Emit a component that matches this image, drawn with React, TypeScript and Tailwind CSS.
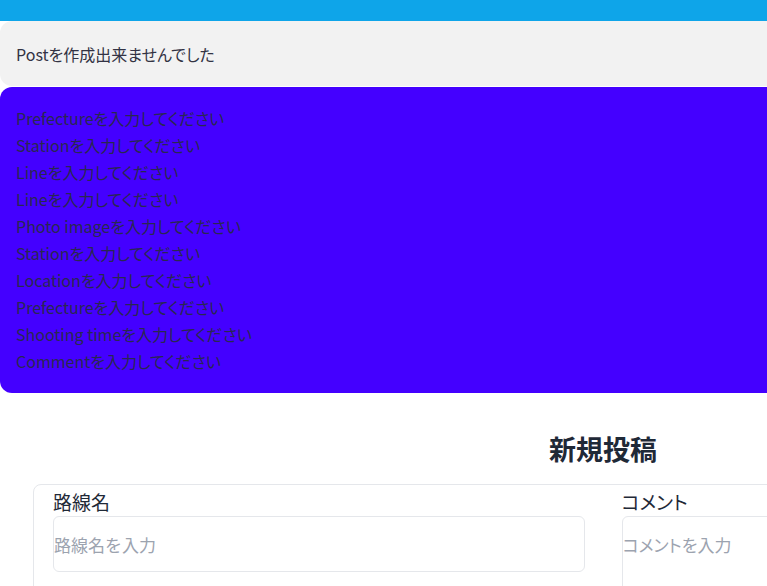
import * as React from "react";

const errors = [
  "Prefecture",
  "Station",
  "Line",
  "Line",
  "Photo image",
  "Station",
  "Location",
  "Prefecture",
  "Shooting time",
  "Comment",
];

export default function App() {
  return (
    <div className="w-[1206px] bg-white font-['Noto_Sans_CJK_JP','Noto_Sans',sans-serif] text-[#1f2937]">
      <nav className="h-[21px] bg-[#0ea5e9]" />

      <div className="flex h-[65px] items-center rounded-xl bg-[#f2f2f2] px-4 text-[16px] text-[#333344] [font-feature-settings:'palt']">
        Postを作成出来ませんでした
      </div>

      <div className="mt-px rounded-xl bg-[#4400ff] px-4 py-[18px] text-[16px] leading-[27px] text-[#2a2850] [font-feature-settings:'palt']">
        {errors.map((e, i) => (
          <p key={i}>{e}を入力してください</p>
        ))}
      </div>

      <h1 className="mt-10 text-center text-[27px] leading-8 font-bold text-[#1f2937]">新規投稿</h1>

      <form className="mx-[33px] mt-[19px] rounded-lg border border-[#e5e7eb] px-[19px] pt-[3px] pb-6">
        <div className="grid grid-cols-2 gap-[37px]">
          <div>
            <label className="block text-[19px] leading-[28px] text-[#1f2937]">路線名</label>
            <input
              className="h-[56px] w-full rounded-md border border-[#e5e7eb] px-0 text-[17px] placeholder:text-[#9ca3af] focus:outline-none"
              placeholder="路線名を入力"
            />
          </div>
          <div>
            <label className="block text-[19px] leading-[28px] text-[#1f2937] [font-feature-settings:'palt']">コメント</label>
            <textarea
              className="h-[160px] w-full resize-none rounded-md border border-[#e5e7eb] px-0 pt-[15px] text-[17px] placeholder:text-[#9ca3af] focus:outline-none [font-feature-settings:'palt']"
              placeholder="コメントを入力"
            />
          </div>
        </div>
      </form>
    </div>
  );
}
